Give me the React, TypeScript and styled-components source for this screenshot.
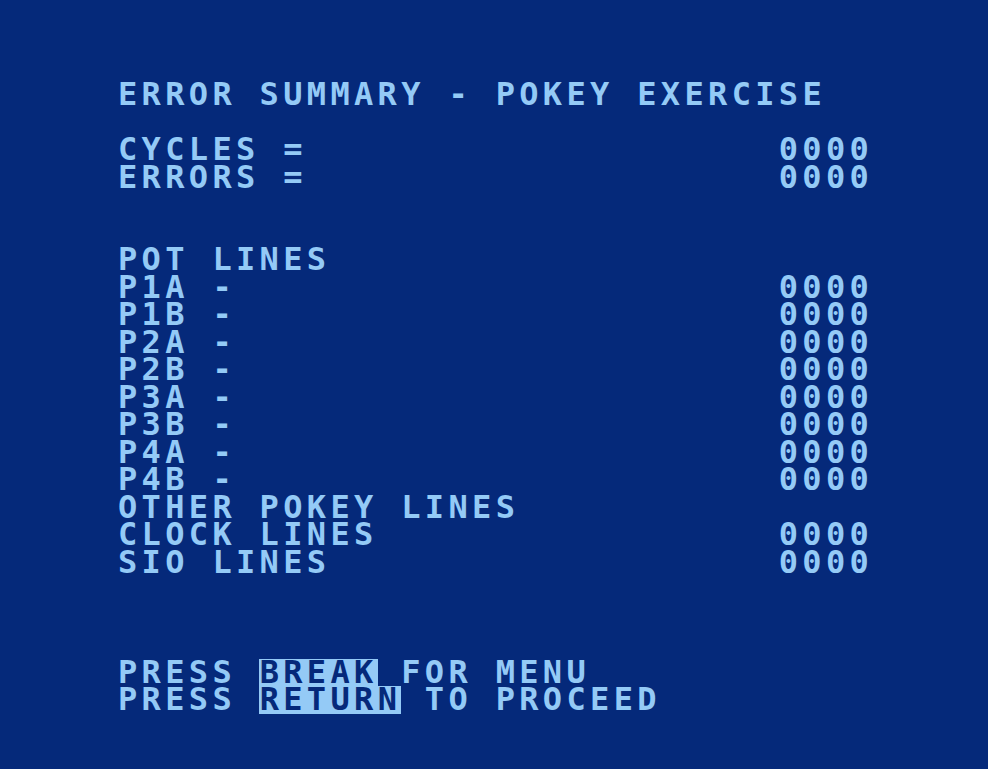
import * as React from "react";
import styled, { createGlobalStyle } from "styled-components";

const BG = "#05297a";
const FG = "#94caf6";
const CELL_W = 23.6;
const CELL_H = 27.5;

const GlobalStyle = createGlobalStyle`
  html, body {
    margin: 0;
    padding: 0;
    background: ${BG};
  }
`;

const Screen = styled.div`
  min-height: 100vh;
  box-sizing: border-box;
  padding: 81px 0 0 118px;
  background: ${BG};
  color: ${FG};
  font-family: "DejaVu Sans Mono", "Liberation Mono", monospace;
  font-weight: bold;
  font-size: 32px;
  letter-spacing: ${CELL_W - 32 * 0.602}px;
`;

const Line = styled.div`
  display: flex;
  justify-content: space-between;
  width: ${CELL_W * 32}px;
  height: ${CELL_H}px;
  line-height: ${CELL_H}px;
  white-space: pre;
`;

const Key = styled.span`
  display: inline-block;
  height: ${CELL_H}px;
  margin-left: -1px;
  padding-left: 1px;
  background: ${FG};
  color: ${BG};
`;

interface RowProps {
  label?: string;
  value?: string;
}

const Row = ({ label = "", value }: RowProps) => (
  <Line>
    <span>{label}</span>
    {value && <span>{value}</span>}
  </Line>
);

const potLines = ["P1A", "P1B", "P2A", "P2B", "P3A", "P3B", "P4A", "P4B"];

export default function App() {
  return (
    <>
      <GlobalStyle />
      <Screen>
        <Row label="ERROR SUMMARY - POKEY EXERCISE" />
        <Row />
        <Row label="CYCLES =" value="0000" />
        <Row label="ERRORS =" value="0000" />
        <Row />
        <Row />
        <Row label="POT LINES" />
        {potLines.map((p) => (
          <Row key={p} label={`${p} -`} value="0000" />
        ))}
        <Row label="OTHER POKEY LINES" />
        <Row label="CLOCK LINES" value="0000" />
        <Row label="SIO LINES" value="0000" />
        <Row />
        <Row />
        <Row />
        <Line>
          <span>
            PRESS <Key>BREAK</Key> FOR MENU
          </span>
        </Line>
        <Line>
          <span>
            PRESS <Key>RETURN</Key> TO PROCEED
          </span>
        </Line>
      </Screen>
    </>
  );
}
